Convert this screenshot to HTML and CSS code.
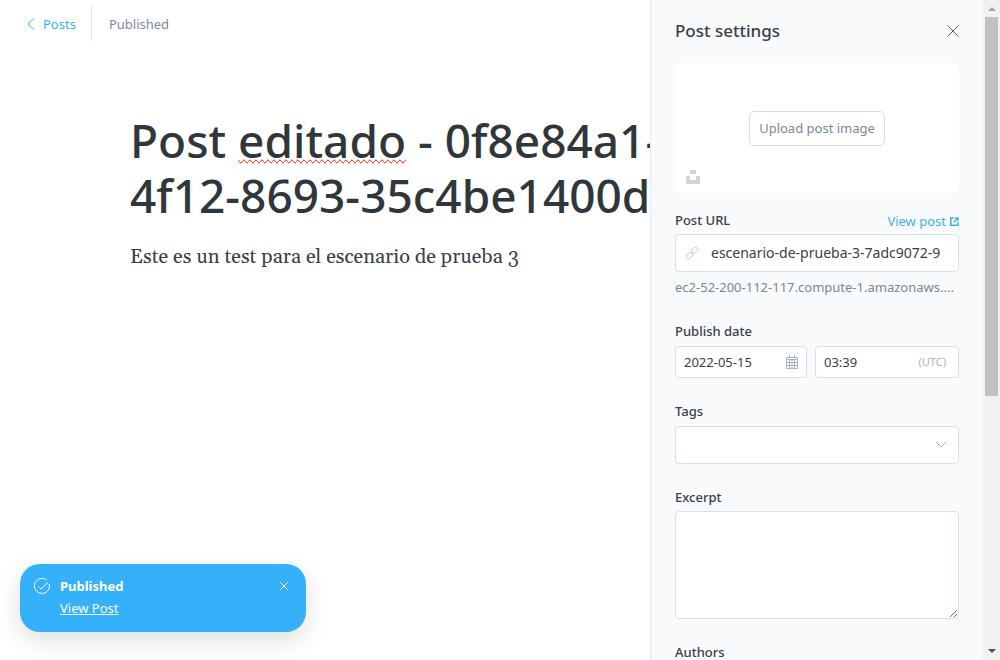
FILE: index.html
```html
<!DOCTYPE html>
<html lang="en">
<head>
<meta charset="utf-8">
<title>Post editor</title>
<link rel="stylesheet" href="styles.css">
</head>
<body>
<div class="app">
  <main class="editor">
    <header class="topbar">
      <a class="back" href="#posts">
        <svg class="icon-back" viewBox="0 0 8 12" aria-hidden="true"><path d="M7 .5 1 6l6 5.500"/></svg>
        <span>Posts</span>
      </a>
      <span class="status">Published</span>
    </header>
    <article class="post">
      <h1 class="title"><span class="title-line">Post <span class="misspelled">editado</span> - 0f8e84a1-</span> <span class="title-line">4f12-8693-35c4be1400d</span></h1>
      <p class="body">Este es un test para el escenario de prueba 3</p>
    </article>
  </main>

  <aside class="panel">
    <div class="settings">
      <div class="settings-head">
        <h2>Post settings</h2>
        <button class="icon-button" type="button" aria-label="Close settings">
          <svg class="icon-close" viewBox="0 0 12 12" aria-hidden="true"><path d="M.3.3l11.400 11.400M11.700.3.3 11.700"/></svg>
        </button>
      </div>
      <div class="uploader">
        <button class="upload" type="button">Upload post image</button>
        <button class="unsplash" type="button" aria-label="Pick from Unsplash">
          <svg class="icon-unsplash" viewBox="0 0 14 14" aria-hidden="true"><path d="M4 0h6v4H4zM0 6h4v4h6V6h4v8H0z"/></svg>
        </button>
      </div>

      <div class="field">
        <div class="label-row">
          <label for="url">Post URL</label>
          <a class="view-post" href="#view">View post
            <svg class="icon-external" viewBox="0 0 9 9" aria-hidden="true"><path d="M4 1H.8v7.200H8V5M5.200 1H8v2.800M8 1 3.800 5.200"/></svg>
          </a>
        </div>
        <div class="control tall">
          <svg class="icon-link" viewBox="0 0 14 14" aria-hidden="true"><rect x="-3.600" y="-2.200" width="7.200" height="4.400" rx="2.200" transform="translate(4.400 9.600) rotate(-45)"/><rect x="-3.600" y="-2.200" width="7.200" height="4.400" rx="2.200" transform="translate(9.600 4.400) rotate(-45)"/><path d="M5 9l4-4"/></svg>
          <input id="url" class="url-input" type="text" value="escenario-de-prueba-3-7adc9072-9">
        </div>
        <p class="hint">ec2-52-200-112-117.compute-1.amazonaws....</p>
      </div>

      <div class="field">
        <label for="date">Publish date</label>
        <div class="date-row">
          <div class="control date">
            <input id="date" type="text" value="2022-05-15">
            <svg class="icon-calendar" viewBox="0 0 12 14" aria-hidden="true"><path d="M.5 2.500h11v11H.5zM.5 4.500h11M3.500 0v3M8.500 0v3M.5 7.500h11M.5 10.500h11M3.500 5v8.500M6 5v8.500M8.500 5v8.500"/></svg>
          </div>
          <div class="control time">
            <input type="text" value="03:39" aria-label="Publish time">
            <span class="zone">(UTC)</span>
          </div>
        </div>
      </div>

      <div class="field">
        <label for="tags">Tags</label>
        <div class="control tall">
          <input id="tags" type="text">
          <svg class="icon-chevron" viewBox="0 0 12 8" aria-hidden="true"><path d="M1 1l5 5 5-5"/></svg>
        </div>
      </div>

      <div class="field">
        <label for="excerpt">Excerpt</label>
        <div class="excerpt-wrap">
          <textarea id="excerpt"></textarea>
        </div>
      </div>

      <div class="field">
        <label for="authors">Authors</label>
        <div class="control tall"><input id="authors" type="text"></div>
      </div>
    </div>
    <div class="scrollbar" aria-hidden="true">
      <svg class="arrow arrow-up" viewBox="0 0 8 4"><path d="M0 4l4-4 4 4z"/></svg>
      <div class="track"><div class="thumb"></div></div>
      <svg class="arrow arrow-down" viewBox="0 0 8 4"><path d="M0 0h8L4 4z"/></svg>
    </div>
  </aside>

  <div class="toast" role="status">
    <svg class="icon-check" viewBox="0 0 16 16" aria-hidden="true"><path d="M15.200 6A7.500 7.500 0 1 1 12.600 2M4 8l3.200 3.200L13.800 4.300"/></svg>
    <div class="toast-text">
      <strong>Published</strong>
      <a href="#view">View Post</a>
    </div>
    <button class="icon-button" type="button" aria-label="Dismiss">
      <svg class="icon-dismiss" viewBox="0 0 10 10" aria-hidden="true"><path d="M1 1l8 8M9 1 1 9"/></svg>
    </button>
  </div>
</div>
</body>
</html>
```
FILE: styles.css
```css
* { box-sizing: border-box; }

body {
  margin: 0;
  color: #394047;
  background: #fff;
  font: 13px/20px "Noto Sans", "Open Sans", sans-serif;
}

h1, h2, p { margin: 0; }
a { color: #3eb0ef; text-decoration: none; }
svg { display: block; flex: none; fill: none; stroke: currentColor; }
button, input, textarea { font: inherit; color: inherit; }

.app {
  display: grid;
  grid-template-columns: minmax(0, 1fr) 350px;
  height: 100vh;
  overflow: hidden;
}

.editor { overflow: hidden; }

.topbar {
  display: flex;
  align-items: center;
  padding: 6px 27px;
}

.back {
  display: flex;
  align-items: center;
  gap: 8px;
  height: 35px;
  padding-right: 15px;
  border-right: 1px solid #dae7f0;
}

.icon-back { width: 8px; height: 12px; }
.status { margin-left: 17px; color: #7c8b9a; }

.post { padding: 66px 0 0 130px; white-space: nowrap; }

.title {
  color: #2f373c;
  font-size: 46px;
  font-weight: 500;
  line-height: 55px;
}

.title-line { display: block; }

.misspelled { text-decoration-line: spelling-error; }

.body {
  margin-top: 18px;
  color: #3a4145;
  font: 20px/32px Gelasio, Georgia, "Liberation Serif", serif;
}

.panel {
  display: flex;
  min-height: 0;
  overflow: hidden;
  background: #f8fafc;
  border-left: 1px solid #dfebf5;
}

.settings { flex: 1; min-width: 0; padding: 19px 24px 0; }

.settings-head {
  display: flex;
  align-items: center;
  justify-content: space-between;
  margin-bottom: 20px;
}

h2 { font-size: 17px; font-weight: 500; line-height: 24px; }

.icon-button {
  padding: 0;
  border: 0;
  background: none;
}

.icon-close { width: 12px; height: 12px; color: #5b6468; }

.uploader {
  display: grid;
  grid-template-rows: 1fr 35px 1fr;
  justify-items: center;
  height: 130px;
  padding: 0 10px;
  border-radius: 4px;
  background: #fff;
}

.upload {
  grid-row: 2;
  height: 35px;
  padding: 0 9px;
  border: 1px solid #d3dfe4;
  border-radius: 5px;
  background: #fff;
  color: #738a94;
}

.unsplash {
  grid-row: 3;
  place-self: end start;
  padding: 0 1px 9px;
  border: 0;
  background: none;
  color: #d3d3d3;
}

.icon-unsplash { width: 14px; height: 14px; fill: currentColor; stroke: none; }

.field { margin-bottom: 23px; }
.field label { display: block; font-weight: 500; line-height: 20px; }
.uploader + .field { margin-top: 17px; }

.label-row { display: flex; justify-content: space-between; }
.view-post { display: flex; align-items: center; gap: 4px; line-height: 22px; }
.icon-external { width: 9px; height: 9px; stroke-width: 1.5; }

.control {
  display: flex;
  align-items: center;
  height: 32px;
  min-width: 0;
  margin-top: 5px;
  padding: 0 11px 0 8px;
  border: 1px solid #d3e2ec;
  border-radius: 4px;
  background: #fff;
}

.control.tall { height: 38px; }
.label-row + .control { margin-top: 2px; }

.control input {
  flex: 1;
  min-width: 0;
  padding: 0;
  border: 0;
  outline: 0;
  background: none;
}

.icon-link { width: 16px; height: 14px; margin-right: 11px; color: #c9d9e6; }
.control .url-input { font-size: 14px; }
.hint { padding: 5px 0 1px; color: #738a94; white-space: nowrap; }

.date-row { display: grid; grid-template-columns: 132fr 144fr; gap: 8px; }
.icon-calendar { width: 12px; height: 14px; color: #abb4be; }
.zone { margin-right: 1px; color: #a5b4bd; font-size: 11px; }
.date { padding-right: 8px; }
.icon-chevron { width: 12px; height: 8px; color: #9fb2bd; }

.excerpt-wrap { display: flex; }

textarea {
  flex: 1;
  min-width: 0;
  height: 108px;
  margin-top: 4px;
  border: 1px solid #d3e2ec;
  border-radius: 4px;
  background: #fff;
  resize: vertical;
}

.scrollbar {
  display: flex;
  flex-direction: column;
  align-items: center;
  justify-content: space-between;
  width: 17px;
  padding: 7px 0;
  background: #f1f1f1;
}

.track { flex: 1; width: 13px; margin: 6px 0; }
.thumb { height: 60.5%; background: #c1c1c1; }
.arrow { width: 8px; height: 4px; stroke: none; }
.arrow-up { fill: #a3a3a3; }
.arrow-down { fill: #505050; }

.toast {
  position: absolute;
  left: 20px;
  bottom: 28px;
  display: flex;
  align-items: flex-start;
  width: 286px;
  height: 68px;
  padding: 12px 16px 12px 14px;
  border-radius: 20px;
  background: #35b1f9;
  box-shadow: 0 8px 24px rgba(0, 0, 0, .13);
  color: #fff;
}

.icon-check { width: 16px; height: 16px; margin: 2px 10px 0 0; }
.toast-text { display: grid; flex: 1; gap: 2px; justify-items: start; }
.toast-text a { color: #fff; text-decoration: underline; }
.toast .icon-button { padding: 5px 0; color: #fff; }
.icon-dismiss { width: 12px; height: 10px; }
```
